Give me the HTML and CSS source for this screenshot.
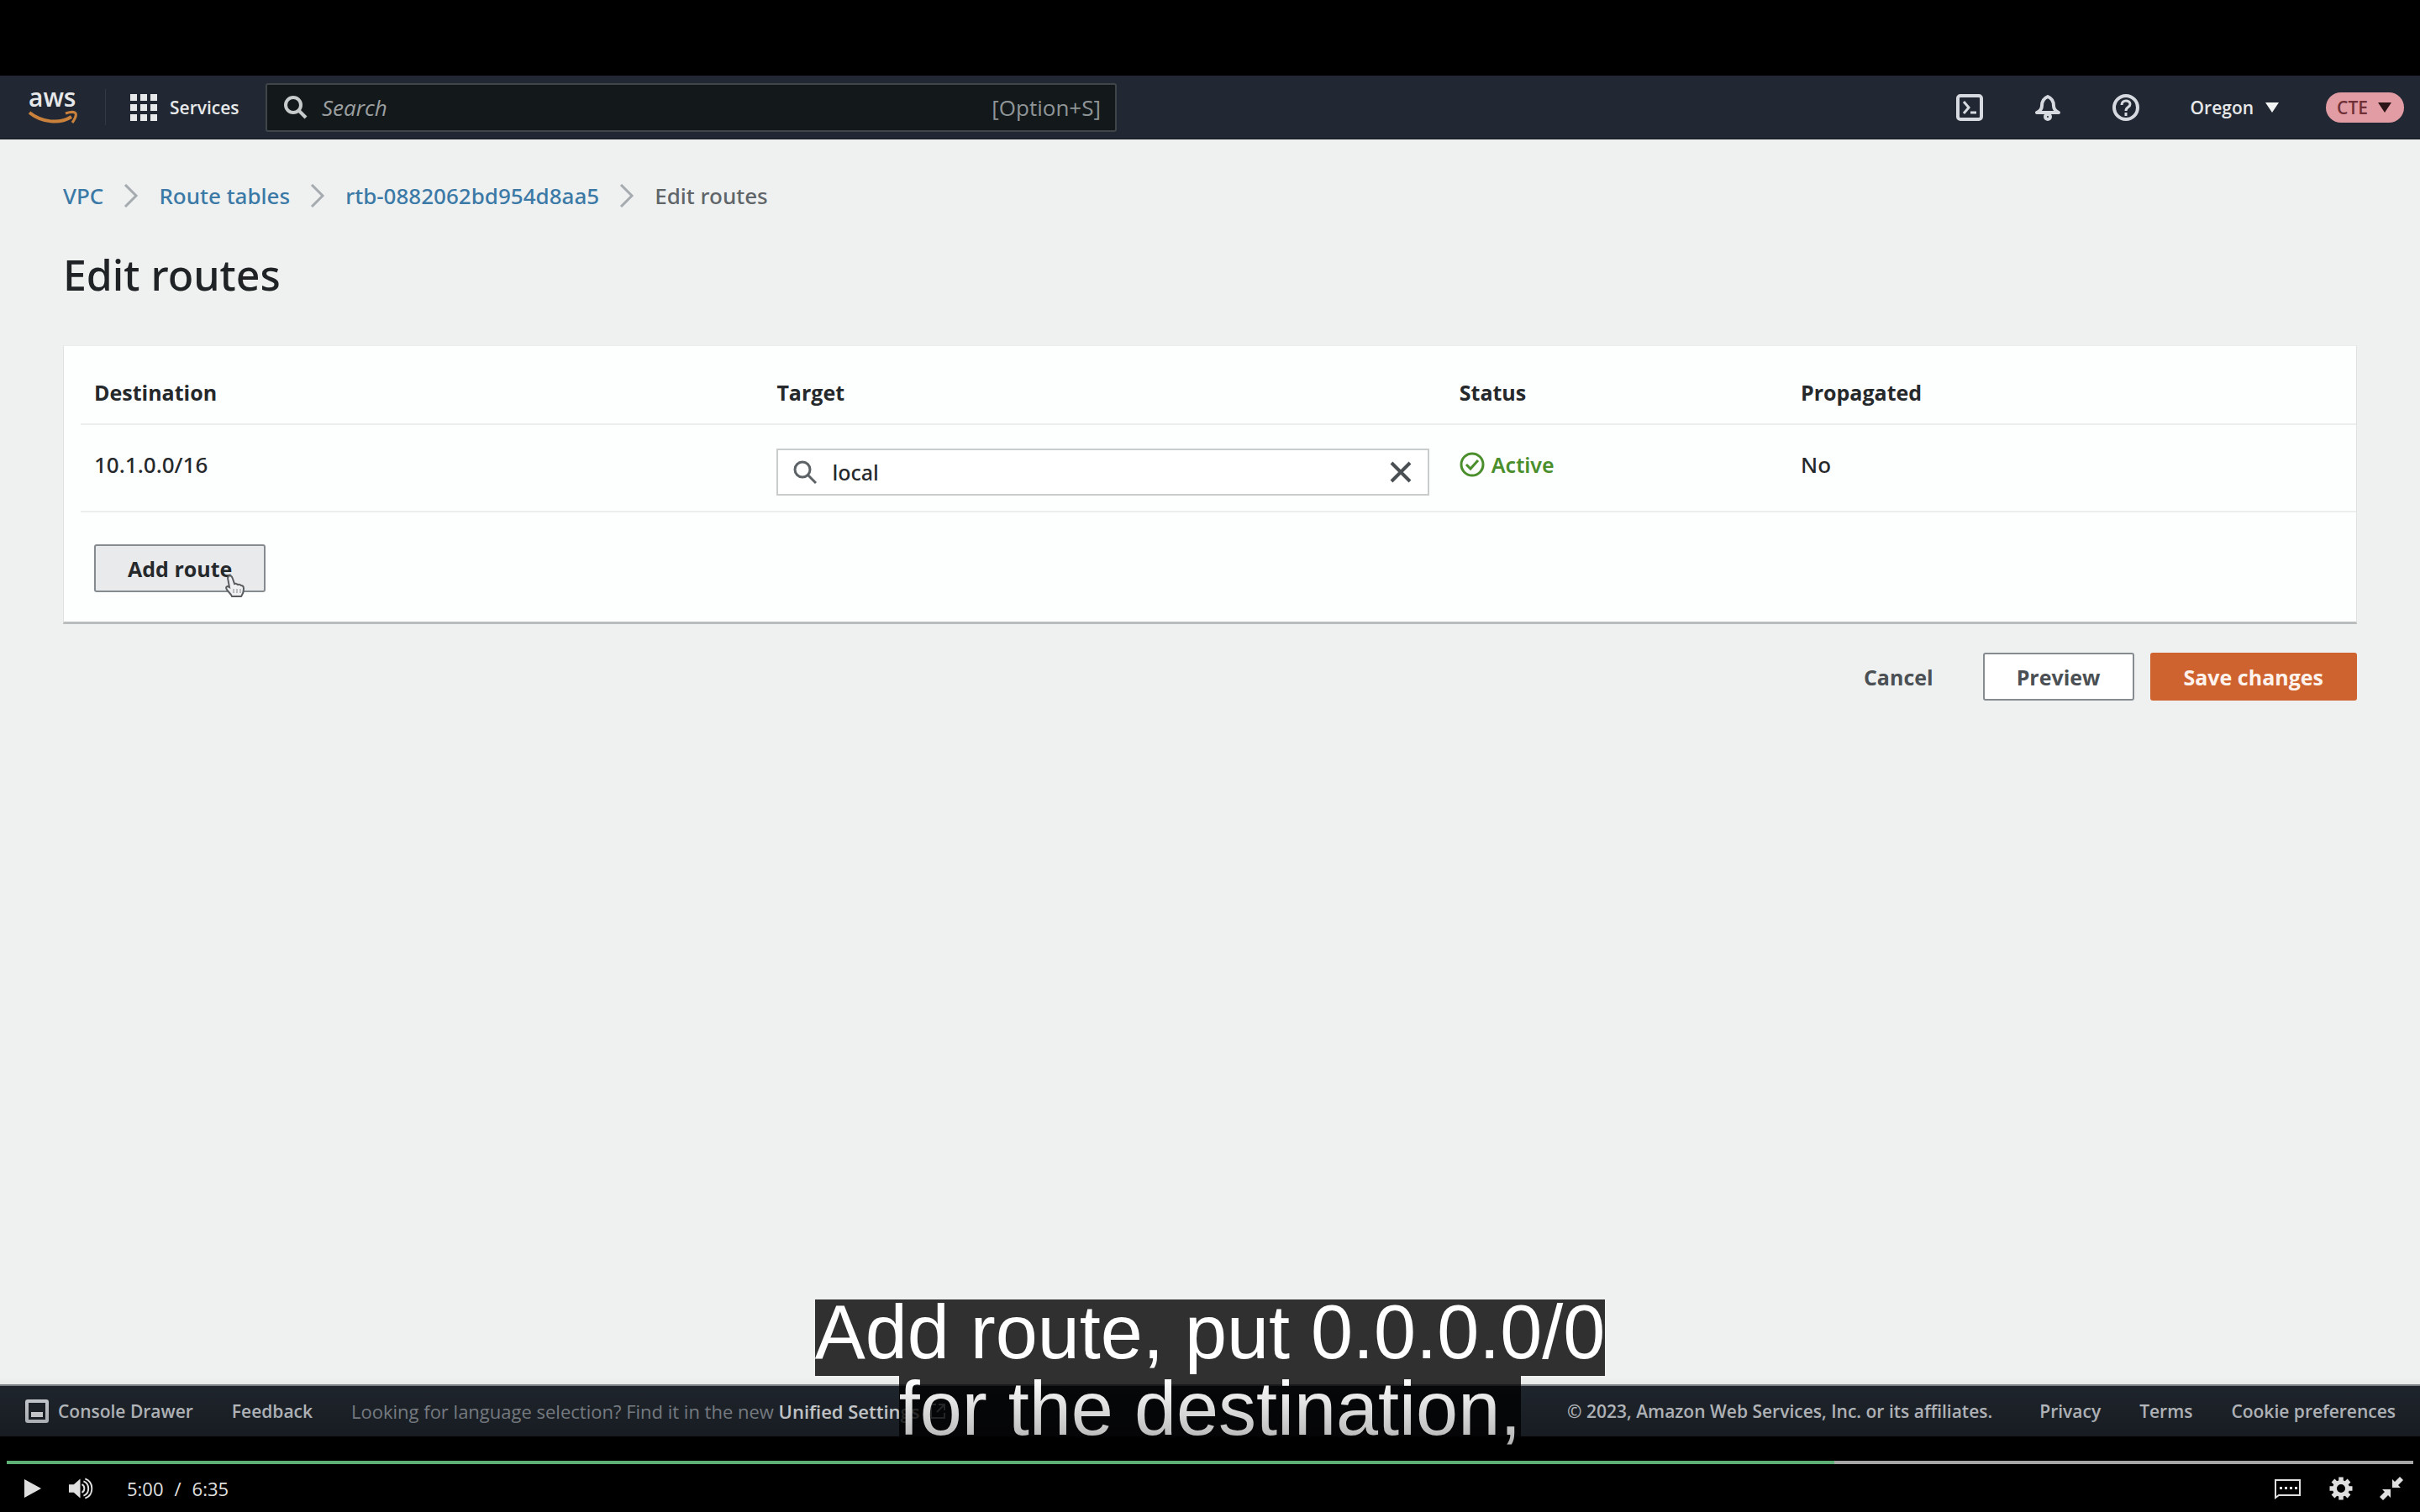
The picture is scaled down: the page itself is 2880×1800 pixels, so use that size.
FILE: index.html
```html
<!DOCTYPE html>
<html lang="en">
<head>
<meta charset="utf-8">
<meta name="viewport" content="width=device-width, initial-scale=1">
<title>Edit routes</title>
<link rel="stylesheet" href="styles.css">
</head>
<body>
<div class="player">
  <div class="frame">
    <header class="topbar">
      <a class="logo" href="#" aria-label="AWS home">
        <span class="logo-text">aws</span>
        <svg class="logo-smile" viewBox="0 0 58 18"><path d="M1 3C16 15 37 17 51 8" fill="none" stroke="#c9813c" stroke-width="4"/><path d="M44 4c6-2 11-2 12 0s-1 7-4 11" fill="none" stroke="#c9813c" stroke-width="3"/></svg>
      </a>
      <button class="services" type="button">
        <svg width="32" height="32" viewBox="0 0 32 32" fill="#e6e8ea"><path d="M0 0h8v8H0zM12 0h8v8h-8zM24 0h8v8h-8zM0 12h8v8H0zM12 12h8v8h-8zM24 12h8v8h-8zM0 24h8v8H0zM12 24h8v8h-8zM24 24h8v8h-8z"/></svg>
        Services
      </button>
      <label class="search">
        <svg width="28" height="28" viewBox="0 0 28 28" fill="none" stroke="#c8cbcb" stroke-width="4"><circle cx="11" cy="11" r="9"/><path d="M17 17l9 9"/></svg>
        <input type="text" placeholder="Search" aria-label="Search">
        <span class="hint">[Option+S]</span>
      </label>
      <nav class="tools" aria-label="Account tools">
        <button type="button" aria-label="CloudShell"><svg width="32" height="32" viewBox="0 0 32 32" fill="none" stroke="#d6dae0" stroke-width="3"><rect x="2" y="2" width="28" height="28" rx="3" stroke-width="4"/><path d="M9 9l6 7-6 7M17 22h7"/></svg></button>
        <button type="button" aria-label="Notifications"><svg width="32" height="32" viewBox="0 0 32 32" fill="none" stroke="#d6dae0" stroke-width="4" stroke-linejoin="round"><path d="M16 3c-5 2-7 6-7 11 0 4-2 6-6 8h26c-4-2-6-4-6-8 0-5-2-9-7-11z"/><circle cx="16" cy="27" r="3"/></svg></button>
        <button type="button" aria-label="Help"><svg width="32" height="32" viewBox="0 0 32 32" fill="none" stroke="#d6dae0" stroke-width="4"><circle cx="16" cy="16" r="14"/><path d="M11 13c0-7 10-6 10-1 0 4-5 3-5 8M16 22v4" stroke-width="3"/></svg></button>
        <button class="region" type="button">Oregon <svg width="16" height="12" viewBox="0 0 16 12"><path d="M0 0h16L8 12z" fill="#f2f3f3"/></svg></button>
        <button class="account" type="button">CTE <svg width="16" height="12" viewBox="0 0 16 12"><path d="M0 0h16L8 12z" fill="#2c1517"/></svg></button>
      </nav>
    </header>

    <main class="content">
      <nav class="crumbs" aria-label="Breadcrumb">
        <a href="#">VPC</a>
        <svg viewBox="0 0 18 28"><path d="M2 1l13 13L2 27"/></svg>
        <a href="#">Route tables</a>
        <svg viewBox="0 0 18 28"><path d="M2 1l13 13L2 27"/></svg>
        <a href="#">rtb-0882062bd954d8aa5</a>
        <svg viewBox="0 0 18 28"><path d="M2 1l13 13L2 27"/></svg>
        <span>Edit routes</span>
      </nav>
      <h1>Edit routes</h1>
      <section class="card">
        <table class="routes">
          <thead>
            <tr><th class="wide">Destination</th><th class="wide">Target</th><th class="narrow">Status</th><th>Propagated</th></tr>
          </thead>
          <tbody>
            <tr>
              <td>10.1.0.0/16</td>
              <td class="target-cell">
                <div class="target">
                  <svg width="28" height="28" viewBox="0 0 28 28" fill="none" stroke="#5c6266" stroke-width="3"><circle cx="11" cy="11" r="9"/><path d="M17 17l10 10"/></svg>
                  <input type="text" value="local" aria-label="Target">
                  <button type="button" aria-label="Clear"><svg width="26" height="26" viewBox="0 0 26 26" fill="none" stroke="#4a4f53" stroke-width="4"><path d="M2 2l22 22M24 2L2 24"/></svg></button>
                </div>
              </td>
              <td><span class="status"><svg width="30" height="30" viewBox="0 0 30 30" fill="none" stroke="#4a8f2c" stroke-width="3"><circle cx="15" cy="15" r="13"/><path d="M8 15l5 5 9-10"/></svg>Active</span></td>
              <td>No</td>
            </tr>
          </tbody>
        </table>
        <div class="add">
          <button class="btn btn-hover" type="button">Add route</button>
          <svg class="cursor" viewBox="0 0 24 28"><path d="M5 2c2-2 4 0 5 3l2 6c2-1 3 0 4 1 2-1 3 0 4 1 2 0 3 2 3 4 0 5-1 6-3 9H9c-1-3-4-5-6-8-2-3 0-5 3-3L4 4z" fill="#eef0f1" stroke="#5a5d60" stroke-width="2"/><path d="M11 17v5M15 17v5M19 17v5" stroke="#8a8d90" stroke-width="1"/></svg>
        </div>
      </section>
      <div class="actions">
        <button class="btn btn-link" type="button">Cancel</button>
        <button class="btn" type="button">Preview</button>
        <button class="btn btn-primary" type="button">Save changes</button>
      </div>
    </main>

    <footer class="footer">
      <button class="drawer" type="button"><svg width="28" height="28" viewBox="0 0 28 28"><rect x="2" y="2" width="24" height="24" rx="1" fill="none" stroke="#d6dae0" stroke-width="4"/><path d="M7 15h14v6H7z" fill="#e8eaed"/></svg>Console Drawer</button>
      <a class="feedback" href="#">Feedback</a>
      <p class="language">Looking for language selection? Find it in the new <a href="#">Unified Settings <svg width="20" height="20" viewBox="0 0 20 20" fill="none" stroke="#d6dae0" stroke-width="2"><path d="M8 2H2v16h16v-6M11 2h7v7M18 2l-9 9"/></svg></a></p>
      <span class="copyright">© 2023, Amazon Web Services, Inc. or its affiliates.</span>
      <a href="#">Privacy</a>
      <a href="#">Terms</a>
      <a href="#">Cookie preferences</a>
    </footer>
  </div>

  <p class="captions"><span>Add route, put 0.0.0.0/0</span><span>for the destination,</span></p>

  <div class="controls">
    <progress class="seek" max="395" value="300" aria-label="Playback position"></progress>
    <div class="control-row">
      <button type="button" aria-label="Play"><svg width="21" height="24" viewBox="0 0 21 24"><path d="M1 1l20 11L1 23z" fill="#e0e0e0"/></svg></button>
      <button type="button" aria-label="Mute"><svg width="30" height="28" viewBox="0 0 31 28" fill="none" stroke="#e0e0e0" stroke-width="2"><path d="M1 9h6l8-7v24l-8-7H1z" fill="#e0e0e0" stroke="none"/><path d="M17 9c4 2 4 8 0 10M19 5c8 3 8 15 0 18M21 2c11 4 11 20 0 24"/></svg></button>
      <span class="time"><span>5:00</span><span>/</span><span>6:35</span></span>
      <button type="button" aria-label="Captions"><svg width="34" height="28" viewBox="0 0 34 28"><path d="M2 25V4h29v18H6z" fill="none" stroke="#e0e0e0" stroke-width="2"/><path d="M7 12h3v3H7zM13 12h3v3h-3zM19 12h3v3h-3zM25 12h3v3h-3z" fill="#e0e0e0"/></svg></button>
      <button type="button" aria-label="Settings"><svg width="28" height="28" viewBox="0 0 28 28" stroke="#e0e0e0" fill="none"><circle cx="14" cy="14" r="7.5" stroke-width="5"/><path d="M14 .5v5M14 22.500v5M.5 14h5M22.500 14h5M4.500 4.500l3.500 3.500M20 20l3.500 3.500M4.500 23.500L8 20M20 8l3.500-3.500" stroke-width="5.500"/></svg></button>
      <button type="button" aria-label="Exit full screen"><svg width="28" height="28" viewBox="0 0 28 28" fill="#e0e0e0"><path d="M15 3v10h10l-3-3 6-6-4-4-6 6zM13 25V15H3l3 3-6 6 4 4 6-6z"/></svg></button>
    </div>
  </div>
</div>
</body>
</html>
```
FILE: styles.css
```css
* { box-sizing: border-box; }
body { margin: 0; background: #000; font-family: "Open Sans", "Noto Sans", sans-serif; }
button, input { font: inherit; color: inherit; margin: 0; padding: 0; border: 0; background: none; }
a { color: inherit; text-decoration: none; }
svg { display: block; flex: none; }

.player { position: relative; display: flex; flex-direction: column; justify-content: center; min-height: 100vh; overflow: hidden; }
.frame { display: flex; flex-direction: column; width: 100%; aspect-ratio: 16 / 9; background: #eff1f1; color: #26292c; font-size: 26px; line-height: 34px; }

.topbar { display: flex; align-items: center; height: 76px; padding: 0 19px 0 34px; background: #222833; color: #e6e8ea; border-bottom: 1px solid #14181c; font-size: 21px; font-weight: 600; }
.logo { width: 92px; border-right: 1px solid #343a45; }
.logo-text { display: block; height: 25px; font-size: 30px; line-height: 20px; font-weight: 600; }
.logo-smile { width: 58px; height: 18px; }
.services { display: flex; align-items: center; gap: 15px; width: 161px; margin: 0 0 0 29px; white-space: nowrap; }
.search { display: flex; align-items: center; flex: 0 1 1013px; height: 58px; padding: 0 17px 0 20px; gap: 17px; border: 2px solid #3f4549; border-radius: 3px; background: #13191b; color: #8f9597; font-size: 26px; font-weight: 400; }
.search input { flex: 1; min-width: 0; outline: 0; }
.search input::placeholder { color: #9b9fa0; font-style: italic; opacity: 1; }
.tools { display: flex; align-items: center; margin-left: auto; gap: 61px; }
.region { display: flex; align-items: center; gap: 14px; }
.account { display: flex; align-items: center; gap: 12px; height: 36px; margin-left: -5px; padding: 0 15px 0 13px; border-radius: 18px; background: #e29ca3; color: #6e3036; }

.content { flex: 1; padding: 50px 75px 0; }
.crumbs { display: flex; align-items: center; gap: 24px; color: #5f6569; font: 500 26px/34px "Noto Sans", "Open Sans", sans-serif; }
.crumbs a { color: #3b79a6; }
.crumbs svg { width: 18px; height: 28px; fill: none; stroke: #a5abae; stroke-width: 3; }
h1 { margin: 43px 0 50px; font: 500 50px/68px "Noto Sans", "Open Sans", sans-serif; color: #202326; }
.card { padding: 20px 0 35px 20px; background: #fdfefe; border: 1px solid #dfe2e2; border-top-color: #eceeee; border-bottom: 3px solid #b9bdbd; }
.routes { width: 100%; table-layout: fixed; border-collapse: collapse; }
.routes th, .routes td { padding: 18px 20px 18px 16px; text-align: left; vertical-align: top; border-bottom: 2px solid #eceeee; }
.routes th { padding-bottom: 20px; font-size: 25px; font-weight: 700; }
.wide { width: 30%; }
.narrow { width: 15%; }
.routes td { height: 104px; padding-top: 30px; padding-bottom: 0; font-family: "Noto Sans", "Open Sans", sans-serif; font-weight: 500; }
.routes .target-cell { padding-top: 28px; padding-bottom: 18px; }
.target { display: flex; align-items: center; gap: 18px; height: 56px; padding: 0 19px 0 18px; border: 2px solid #c8cccc; background: #fff; font-size: 25px; }
.target input { flex: 1; min-width: 0; outline: 0; }
.status { display: flex; align-items: center; gap: 8px; color: #4a8f2c; font-size: 25px; font-weight: 600; }
.add { position: relative; padding: 38px 0 0 16px; }
.cursor { position: absolute; left: 171px; top: 74px; width: 24px; height: 28px; }
.btn { height: 57px; padding: 0 38px; border: 2px solid #858b8f; border-radius: 3px; background: #fff; color: #4b5054; font-size: 25px; font-weight: 700; white-space: nowrap; }
.btn-hover { background: #e9eaec; color: #26292c; }
.btn-link { border-color: transparent; background: none; }
.btn-primary { border-color: #cf632f; background: #cf632f; color: #fdf3ec; }
.actions { display: flex; justify-content: flex-end; gap: 19px; margin-top: 34px; }

.footer { display: flex; align-items: center; height: 62px; padding: 0 29px 0 30px; gap: 46px; border-top: 2px solid #7d8286; background: #20262e; color: #cdd1d6; font-size: 21px; font-weight: 600; white-space: nowrap; }
.drawer { display: flex; align-items: center; gap: 11px; }
.language { margin: 0; color: #8b9198; font-size: 22px; font-weight: 400; }
.language a { display: inline-flex; align-items: center; gap: 12px; color: #e3e6e9; font-weight: 600; }
.copyright { margin: 0 10px 0 auto; }

.captions { position: absolute; left: 0; right: 0; bottom: 71px; display: flex; flex-direction: column; align-items: center; margin: 0; color: #fff; font: 90px/78px "Liberation Sans", Arial, sans-serif; }
.captions span { padding-bottom: 13px; background: rgba(0, 0, 0, .8); }

.controls { position: absolute; left: 0; right: 0; bottom: 0; padding: 99px 8px 0; height: 160px; background: linear-gradient(rgba(0, 0, 0, 0), rgba(0, 0, 0, .6)); color: #e0e0e0; }
.seek { display: block; width: 100%; height: 4px; appearance: none; border: 0; background: #a6a6a6; }
.seek::-webkit-progress-bar { background: #a6a6a6; }
.seek::-webkit-progress-value { background: #5fb077; }
.control-row { display: flex; align-items: center; gap: 32px; height: 58px; padding: 0 12px 0 20px; }
.time { display: flex; gap: 13px; margin: 0 auto 0 8px; font-size: 22px; line-height: 30px; }
```
